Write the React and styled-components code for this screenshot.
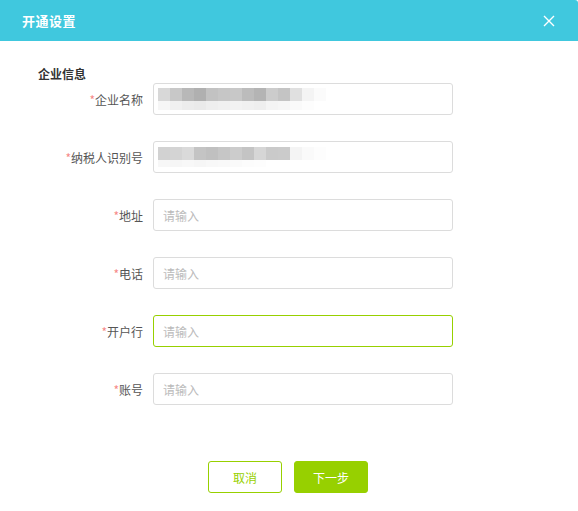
import React from 'react';
import styled, { createGlobalStyle } from 'styled-components';

const Global = createGlobalStyle`
  html, body { margin: 0; padding: 0; background: #fff; }
  body { font-family: "Microsoft YaHei", "Noto Sans CJK SC", "Liberation Sans", sans-serif; }
  * { box-sizing: border-box; }
`;

const Dialog = styled.div`
  width: 578px;
  height: 511px;
  background: #fff;
  display: flex;
  flex-direction: column;
`;

const Header = styled.div`
  height: 41px;
  flex: none;
  background: #40c8de;
  display: flex;
  align-items: center;
  justify-content: space-between;
  padding: 0 22px 0 22px;
  border-radius: 0 3px 0 0;
`;

const Title = styled.h3`
  margin: 0;
  color: #fff;
  font-size: 13px;
  font-weight: bold;
  letter-spacing: 0.5px;
`;

const Close = styled.button`
  border: 0;
  background: none;
  padding: 0;
  width: 14px;
  height: 14px;
  display: flex;
  cursor: pointer;
`;

const Body = styled.div`
  padding: 26px 0 0 38px;
  flex: 1;
`;

const Section = styled.div`
  font-size: 12px;
  font-weight: bold;
  color: #333;
  line-height: 14px;
`;

const Form = styled.div`
  display: flex;
  flex-direction: column;
  gap: 26px;
  margin-top: 2px;
`;

const Row = styled.div`
  display: flex;
  align-items: center;
`;

const Label = styled.label`
  width: 115px;
  padding-right: 10px;
  text-align: right;
  font-size: 12px;
  color: #555;
`;

const Star = styled.span`
  color: #f56c6c;
  opacity: 0.8;
`;

const Field = styled.div`
  width: 300px;
  height: 32px;
  border: 1px solid ${({ $active }) => ($active ? '#97d000' : '#dcdcdc')};
  border-radius: 3px;
  padding: 0 9px;
  display: flex;
  align-items: center;
  position: relative;
  overflow: hidden;
`;

const Input = styled.input`
  border: 0;
  outline: none;
  width: 100%;
  height: 100%;
  padding: 0;
  font: inherit;
  font-size: 12px;
  color: #333;
  background: transparent;
  &::placeholder { color: #bbb; }
`;

const Mosaic = styled.div`
  display: flex;
  flex-direction: column;
  margin-left: -5px;
`;

const MosaicLine = styled.div`
  display: flex;
  height: ${({ $h }) => $h}px;
`;

const Cell = styled.span`
  width: 12px;
  height: 100%;
  flex: none;
`;

const Footer = styled.div`
  display: flex;
  justify-content: center;
  gap: 12px;
  padding: 56px 0 0 0;
  margin-left: -40px;
`;

const Button = styled.button`
  width: 74px;
  height: 32px;
  border-radius: 3px;
  font: inherit;
  font-size: 12px;
  cursor: pointer;
  border: 1px solid #97d000;
  background: ${({ $primary }) => ($primary ? '#97d000' : '#fff')};
  color: ${({ $primary }) => ($primary ? '#fff' : '#97d000')};
`;

const blur1 = [
  ['#d8d8d8', '#c8c8c8', '#b8b8b8', '#b0b0b0', '#c2c2c2', '#c6c6c6', '#c8c8c8', '#bcbcbc', '#b4b4b4', '#cccccc', '#c4c4c4', '#e0e0e0', '#f4f4f4', '#fbfbfb'],
  ['#f6f6f6', '#f0f0f0', '#ececec', '#eaeaea', '#eeeeee', '#f0f0f0', '#f2f2f2', '#f0f0f0', '#eeeeee', '#f4f4f4', '#f6f6f6', '#fafafa', '#fdfdfd', '#fff'],
];
const blur2 = [
  ['#d2d2d2', '#d4d4d4', '#dadada', '#c4c4c4', '#c0c0c0', '#c6c6c6', '#cccccc', '#c4c4c4', '#d6d6d6', '#cacaca', '#cbcbcb', '#f4f4f4', '#fafafa', '#fdfdfd'],
  ['#f7f7f7', '#f6f6f6', '#f8f8f8', '#f6f6f6', '#f8f8f8', '#f9f9f9', '#fafafa', '#fcfcfc', '#fdfdfd', '#fff', '#fff', '#fff', '#fff', '#fff'],
];

const Blurred = ({ rows, heights }) => (
  <Mosaic>
    {rows.map((r, i) => (
      <MosaicLine key={i} $h={heights[i]}>
        {r.map((c, j) => <Cell key={j} style={{ background: c }} />)}
      </MosaicLine>
    ))}
  </Mosaic>
);

const fields = [
  { label: '企业名称', blur: blur1, heights: [13, 9] },
  { label: '纳税人识别号', blur: blur2, heights: [13, 7] },
  { label: '地址' },
  { label: '电话' },
  { label: '开户行', active: true },
  { label: '账号' },
];

export default function App() {
  return (
    <>
      <Global />
      <Dialog>
        <Header>
          <Title>开通设置</Title>
          <Close aria-label="关闭">
            <svg width="14" height="14" viewBox="0 0 14 14">
              <path d="M2 2L12 12M12 2L2 12" stroke="#fff" strokeWidth="1.4" />
            </svg>
          </Close>
        </Header>
        <Body>
          <Section>企业信息</Section>
          <Form>
            {fields.map((f) => (
              <Row key={f.label}>
                <Label><Star>*</Star>{f.label}</Label>
                <Field $active={f.active}>
                  {f.blur ? (
                    <Blurred rows={f.blur} heights={f.heights} />
                  ) : (
                    <Input placeholder="请输入" />
                  )}
                </Field>
              </Row>
            ))}
          </Form>
          <Footer>
            <Button>取消</Button>
            <Button $primary>下一步</Button>
          </Footer>
        </Body>
      </Dialog>
    </>
  );
}
